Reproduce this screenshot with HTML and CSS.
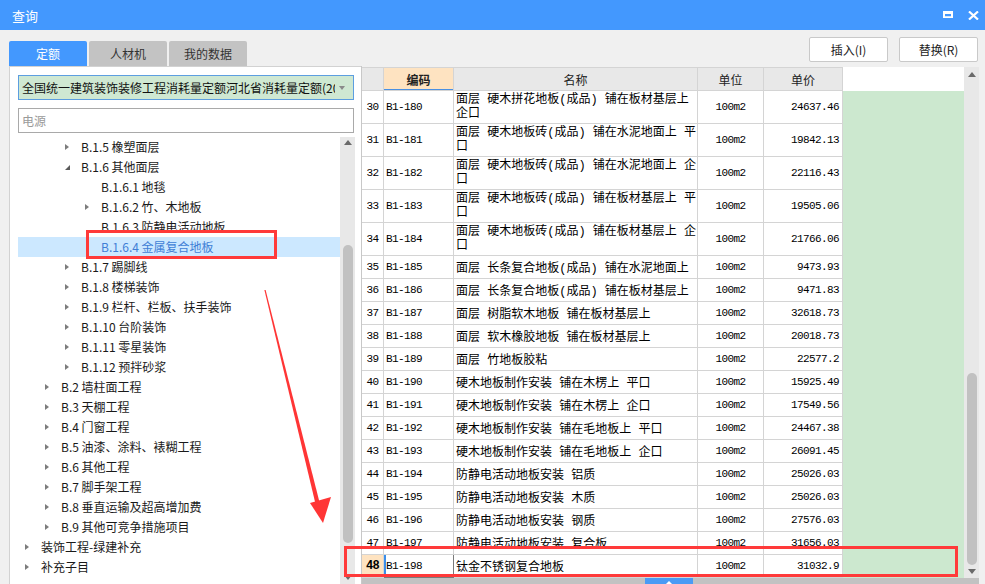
FILE: index.html
```html
<!DOCTYPE html>
<html lang="zh-CN">
<head>
<meta charset="utf-8">
<title>查询</title>
<link rel="stylesheet" href="styles.css">
</head>
<body>
<div class="window">
  <header class="titlebar">
    <span class="title">查询</span>
    <div class="win-ctrls">
      <svg class="ic-max" width="10" height="7" viewBox="0 0 10 7"><path d="M0 0H10V7H0Z M2 3H8V5.2H2Z" fill="#fff" fill-rule="evenodd"/></svg>
      <svg class="ic-close" width="11" height="9" viewBox="0 0 11 9"><path d="M1 0.5L10 8.5M10 0.5L1 8.5" stroke="#fff" stroke-width="2.2"/></svg>
    </div>
  </header>

  <div class="toolbar">
    <nav class="tabs">
      <span class="tab active">定额</span>
      <span class="tab">人材机</span>
      <span class="tab">我的数据</span>
    </nav>
    <div class="actions">
      <button class="btn">插入(I)</button>
      <button class="btn">替换(R)</button>
    </div>
  </div>

  <div class="main">
    <aside class="left">
      <div class="select"><span class="select-text">全国统一建筑装饰装修工程消耗量定额河北省消耗量定额(20</span><span class="caret"></span></div>
      <input class="search" type="text" placeholder="电源">
      <div class="tree-wrap">
        <ul class="tree">
          <li class="node l2"><span class="tw closed"></span>B.1.5 橡塑面层</li>
          <li class="node l2"><span class="tw open"></span>B.1.6 其他面层</li>
          <li class="node l3"><span class="tw"></span>B.1.6.1 地毯</li>
          <li class="node l3"><span class="tw closed"></span>B.1.6.2 竹、木地板</li>
          <li class="node l3"><span class="tw"></span>B.1.6.3 防静电活动地板</li>
          <li class="node l3 sel"><span class="tw"></span>B.1.6.4 金属复合地板</li>
          <li class="node l2"><span class="tw closed"></span>B.1.7 踢脚线</li>
          <li class="node l2"><span class="tw closed"></span>B.1.8 楼梯装饰</li>
          <li class="node l2"><span class="tw closed"></span>B.1.9 栏杆、栏板、扶手装饰</li>
          <li class="node l2"><span class="tw closed"></span>B.1.10 台阶装饰</li>
          <li class="node l2"><span class="tw closed"></span>B.1.11 零星装饰</li>
          <li class="node l2"><span class="tw closed"></span>B.1.12 预拌砂浆</li>
          <li class="node l1"><span class="tw closed"></span>B.2 墙柱面工程</li>
          <li class="node l1"><span class="tw closed"></span>B.3 天棚工程</li>
          <li class="node l1"><span class="tw closed"></span>B.4 门窗工程</li>
          <li class="node l1"><span class="tw closed"></span>B.5 油漆、涂料、裱糊工程</li>
          <li class="node l1"><span class="tw closed"></span>B.6 其他工程</li>
          <li class="node l1"><span class="tw closed"></span>B.7 脚手架工程</li>
          <li class="node l1"><span class="tw closed"></span>B.8 垂直运输及超高增加费</li>
          <li class="node l1"><span class="tw closed"></span>B.9 其他可竞争措施项目</li>
          <li class="node l0"><span class="tw closed"></span>装饰工程-绿建补充</li>
          <li class="node l0"><span class="tw closed"></span>补充子目</li>
        </ul>
        <div class="vscroll vs-left">
          <span class="arr-up"></span>
          <span class="thumb"></span>
          <span class="arr-down"></span>
        </div>
      </div>
    </aside>

    <section class="right">
      <div class="grid-wrap">
        <div class="table">
          <div class="row head">
            <span class="c num"></span>
            <span class="c hcode">编码</span>
            <span class="c">名称</span>
            <span class="c">单位</span>
            <span class="c">单价</span>
          </div>
          <div class="row tall"><span class="c num">30</span><span class="c code">B1-180</span><span class="c name">面层 硬木拼花地板(成品) 铺在板材基层上<br>企口</span><span class="c unit">100m2</span><span class="c price">24637.46</span></div>
          <div class="row tall"><span class="c num">31</span><span class="c code">B1-181</span><span class="c name">面层 硬木地板砖(成品) 铺在水泥地面上 平<br>口</span><span class="c unit">100m2</span><span class="c price">19842.13</span></div>
          <div class="row tall"><span class="c num">32</span><span class="c code">B1-182</span><span class="c name">面层 硬木地板砖(成品) 铺在水泥地面上 企<br>口</span><span class="c unit">100m2</span><span class="c price">22116.43</span></div>
          <div class="row tall"><span class="c num">33</span><span class="c code">B1-183</span><span class="c name">面层 硬木地板砖(成品) 铺在板材基层上 平<br>口</span><span class="c unit">100m2</span><span class="c price">19505.06</span></div>
          <div class="row tall"><span class="c num">34</span><span class="c code">B1-184</span><span class="c name">面层 硬木地板砖(成品) 铺在板材基层上 企<br>口</span><span class="c unit">100m2</span><span class="c price">21766.06</span></div>
          <div class="row"><span class="c num">35</span><span class="c code">B1-185</span><span class="c name">面层 长条复合地板(成品) 铺在水泥地面上</span><span class="c unit">100m2</span><span class="c price">9473.93</span></div>
          <div class="row"><span class="c num">36</span><span class="c code">B1-186</span><span class="c name">面层 长条复合地板(成品) 铺在板材基层上</span><span class="c unit">100m2</span><span class="c price">9471.83</span></div>
          <div class="row"><span class="c num">37</span><span class="c code">B1-187</span><span class="c name">面层 树脂软木地板 铺在板材基层上</span><span class="c unit">100m2</span><span class="c price">32618.73</span></div>
          <div class="row"><span class="c num">38</span><span class="c code">B1-188</span><span class="c name">面层 软木橡胶地板 铺在板材基层上</span><span class="c unit">100m2</span><span class="c price">20018.73</span></div>
          <div class="row"><span class="c num">39</span><span class="c code">B1-189</span><span class="c name">面层 竹地板胶粘</span><span class="c unit">100m2</span><span class="c price">22577.2</span></div>
          <div class="row"><span class="c num">40</span><span class="c code">B1-190</span><span class="c name">硬木地板制作安装 铺在木楞上 平口</span><span class="c unit">100m2</span><span class="c price">15925.49</span></div>
          <div class="row"><span class="c num">41</span><span class="c code">B1-191</span><span class="c name">硬木地板制作安装 铺在木楞上 企口</span><span class="c unit">100m2</span><span class="c price">17549.56</span></div>
          <div class="row"><span class="c num">42</span><span class="c code">B1-192</span><span class="c name">硬木地板制作安装 铺在毛地板上 平口</span><span class="c unit">100m2</span><span class="c price">24467.38</span></div>
          <div class="row"><span class="c num">43</span><span class="c code">B1-193</span><span class="c name">硬木地板制作安装 铺在毛地板上 企口</span><span class="c unit">100m2</span><span class="c price">26091.45</span></div>
          <div class="row"><span class="c num">44</span><span class="c code">B1-194</span><span class="c name">防静电活动地板安装 铝质</span><span class="c unit">100m2</span><span class="c price">25026.03</span></div>
          <div class="row"><span class="c num">45</span><span class="c code">B1-195</span><span class="c name">防静电活动地板安装 木质</span><span class="c unit">100m2</span><span class="c price">25026.03</span></div>
          <div class="row"><span class="c num">46</span><span class="c code">B1-196</span><span class="c name">防静电活动地板安装 钢质</span><span class="c unit">100m2</span><span class="c price">27576.03</span></div>
          <div class="row"><span class="c num">47</span><span class="c code">B1-197</span><span class="c name">防静电活动地板安装 复合板</span><span class="c unit">100m2</span><span class="c price">31656.03</span></div>
          <div class="row current"><span class="c num">48</span><span class="c code">B1-198</span><span class="c name">钛金不锈钢复合地板</span><span class="c unit">100m2</span><span class="c price">31032.9</span></div>
        </div>
        <div class="filler"><div class="filler-head"></div><div class="filler-body"></div></div>
        <div class="vscroll vs-right">
          <span class="arr-up"></span>
          <span class="thumb"></span>
          <span class="arr-down"></span>
        </div>
      </div>
      <div class="hscroll"><span class="hs-btn"><span class="hs-tri"></span></span></div>
    </section>
  </div>

  <div class="mark mark-tree"></div>
  <div class="mark mark-row"></div>
  <svg class="arrow" width="985" height="584" viewBox="0 0 985 584">
    <polygon points="264.4,290.1 265.6,289.9 320.1,504.5 315.9,505.5" fill="#ff3535"/>
    <polygon points="310,503 331,497 323,523" fill="#ff3535"/>
  </svg>
</div>
</body>
</html>
```

FILE: styles.css
```css
* { box-sizing: border-box; }
html, body { margin: 0; padding: 0; }
body {
  width: 985px;
  height: 584px;
  overflow: hidden;
  background: #f0f0f0;
  font-family: "Noto Sans CJK SC", "Microsoft YaHei", sans-serif;
  font-size: 12px;
  color: #1a1a1a;
}
.window { position: relative; width: 985px; height: 584px; overflow: hidden; }

/* title bar */
.titlebar {
  height: 30px;
  background: #4398fe;
  display: flex;
  align-items: center;
  padding: 0 6px 0 12px;
  color: #fff;
  font-size: 13px;
}
.title { line-height: 1; }
.win-ctrls { margin-left: auto; display: flex; align-items: center; gap: 15px; }
.win-ctrls svg { display: block; }
.ic-max { margin-top: -1px; }

/* toolbar */
.toolbar { height: 36px; display: flex; padding: 0 7px 0 9px; }
.tabs { display: flex; gap: 2px; align-self: flex-end; }
.tab {
  width: 78px;
  height: 25px;
  display: flex;
  align-items: center;
  justify-content: center;
  background: #c3c3c3;
  color: #333;
  border-radius: 2px 2px 0 0;
  font-size: 12px;
}
.tab.active { background: #4398fe; color: #fff; }
.actions { margin-left: auto; display: flex; gap: 11px; padding-top: 7px; }
.btn {
  width: 79px;
  height: 25px;
  background: #fff;
  border: 1px solid #c9c9c9;
  border-radius: 2px;
  font-family: inherit;
  font-size: 12px;
  color: #222;
  padding: 0;
}

/* main */
.main { display: flex; height: 518px; padding-left: 9px; }

.left {
  width: 352px;
  flex: none;
  background: #fff;
  border-left: 1px solid #d2d2d2;
  border-top: 1px solid #d2d2d2;
  padding: 8px 6px 0 8px;
  display: flex;
  flex-direction: column;
}
.select {
  height: 25px;
  flex: none;
  margin-right: 1px;
  background: #cfe8d2;
  border: 1px solid #5c9ee0;
  display: flex;
  align-items: center;
  padding: 0 8px 0 3px;
}
.select-text { flex: 1; white-space: nowrap; overflow: hidden; color: #111; }
.caret {
  flex: none;
  margin-left: 4px;
  width: 0; height: 0;
  border-top: 4px solid #8a8a8a;
  border-left: 3.5px solid transparent;
  border-right: 3.5px solid transparent;
}
.search {
  height: 25px;
  flex: none;
  margin: 8px 1px 0 0;
  border: 1px solid #a9a9a9;
  padding: 0 0 0 3px;
  font-family: inherit;
  font-size: 12px;
  outline: none;
  background: #fff;
}
.search::placeholder { color: #9a9a9a; }

.tree-wrap { margin-top: 4px; flex: 1; display: flex; min-height: 0; }
.tree { list-style: none; margin: 0; padding: 0; width: 322px; flex: none; }
.node {
  height: 20px;
  line-height: 20px;
  display: flex;
  align-items: center;
  white-space: nowrap;
  color: #1a1a1a;
}
.node.l0 { padding-left: 7px; }
.node.l1 { padding-left: 27px; }
.node.l2 { padding-left: 47px; }
.node.l3 { padding-left: 67px; }
.node.sel { background: #cce8ff; color: #3f7fd6; }
.tw { width: 16px; flex: none; height: 20px; display: flex; align-items: center; }
.tw.closed::before {
  content: "";
  width: 0; height: 0;
  border-left: 4px solid #7d7d7d;
  border-top: 3.5px solid transparent;
  border-bottom: 3.5px solid transparent;
}
.tw.open::before {
  content: "";
  width: 0; height: 0;
  border-right: 5px solid #5a5a5a;
  border-top: 5px solid transparent;
  margin-top: 1px;
}

/* scrollbars */
.vscroll {
  width: 15px;
  flex: none;
  background: #e8e8e8;
  display: flex;
  flex-direction: column;
  align-items: center;
}
.arr-up {
  width: 0; height: 0;
  border-bottom: 5px solid #6a6a6a;
  border-left: 4px solid transparent;
  border-right: 4px solid transparent;
}
.arr-down {
  width: 0; height: 0;
  margin-top: auto;
  border-top: 5px solid #6a6a6a;
  border-left: 4px solid transparent;
  border-right: 4px solid transparent;
}
.thumb { width: 10px; border-radius: 5px; background: #c1c1c1; }
.vs-left .arr-up { margin-top: 3px; }
.vs-left .thumb { margin-top: 100px; height: 298px; }
.vs-left .arr-down { margin-bottom: 4px; }
.vs-right .arr-up { margin-top: 5px; }
.vs-right .thumb { margin-top: 296px; height: 192px; }
.vs-right .arr-down { margin-bottom: 4px; }

/* right table */
.right {
  flex: 1;
  margin-right: 6px;
  padding-top: 1px;
  border-left: 1px solid #c8c8c8;
  display: flex;
  flex-direction: column;
}
.grid-wrap { display: flex; height: 511px; flex: none; }
.table { width: 481px; flex: none; background: #fff; }
.row {
  display: grid;
  grid-template-columns: 22px 70px 244px 66px 79px;
  height: 23px;
}
.row.tall { height: 33px; }
.row.head { height: 24px; }
.c {
  border-right: 1px solid #d4d4d4;
  border-bottom: 1px solid #d4d4d4;
  display: flex;
  align-items: center;
  overflow: hidden;
  white-space: nowrap;
  color: #000;
}
.head .c {
  background: #e8e8e8;
  border-top: 1px solid #d4d4d4;
  justify-content: center;
  color: #222;
}
.head .hcode {
  background: #fee3c1;
  font-weight: bold;
  box-shadow: inset 0 -1px 0 #4a90e2;
}
.num, .code, .unit, .price {
  font-family: "Liberation Mono", monospace;
  font-size: 11px;
  letter-spacing: -0.6px;
}
.num { justify-content: center; }
.code { padding-left: 2px; }
.name {
  padding-left: 2px;
  font-family: "Liberation Mono", "Noto Sans CJK SC", monospace;
  font-size: 12px;
  letter-spacing: 0;
}
.tall .name { display: block; line-height: 14px; padding-top: 2px; }
.unit { justify-content: center; }
.price { justify-content: flex-end; padding-right: 3px; }
.current .num { background: #fee3c1; font-weight: bold; font-size: 12px; }
.current .code { box-shadow: inset 2px 0 0 #3b8eea; border-right-color: #7a7a7a; border-bottom-color: #7a7a7a; }

.filler { width: 121px; flex: none; display: flex; flex-direction: column; }
.filler-head { height: 24px; background: #fff; }
.filler-body { flex: 1; background: #cce8cf; }

.hscroll {
  height: 15px;
  flex: none;
  background: #c2c2c2;
  padding-left: 283px;
  display: flex;
}
.hs-btn {
  width: 48px;
  background: #4a9bf5;
  display: flex;
  justify-content: center;
  padding-top: 3px;
}
.hs-tri {
  width: 0; height: 0;
  border-bottom: 3px solid #fff;
  border-left: 3px solid transparent;
  border-right: 3px solid transparent;
}

/* annotations */
.mark { position: absolute; border: 3px solid #ff3a3a; }
.mark-tree { left: 86px; top: 230px; width: 191px; height: 29px; }
.mark-row { left: 344px; top: 546px; width: 614px; height: 31px; }
.arrow { position: absolute; left: 0; top: 0; pointer-events: none; }
```
